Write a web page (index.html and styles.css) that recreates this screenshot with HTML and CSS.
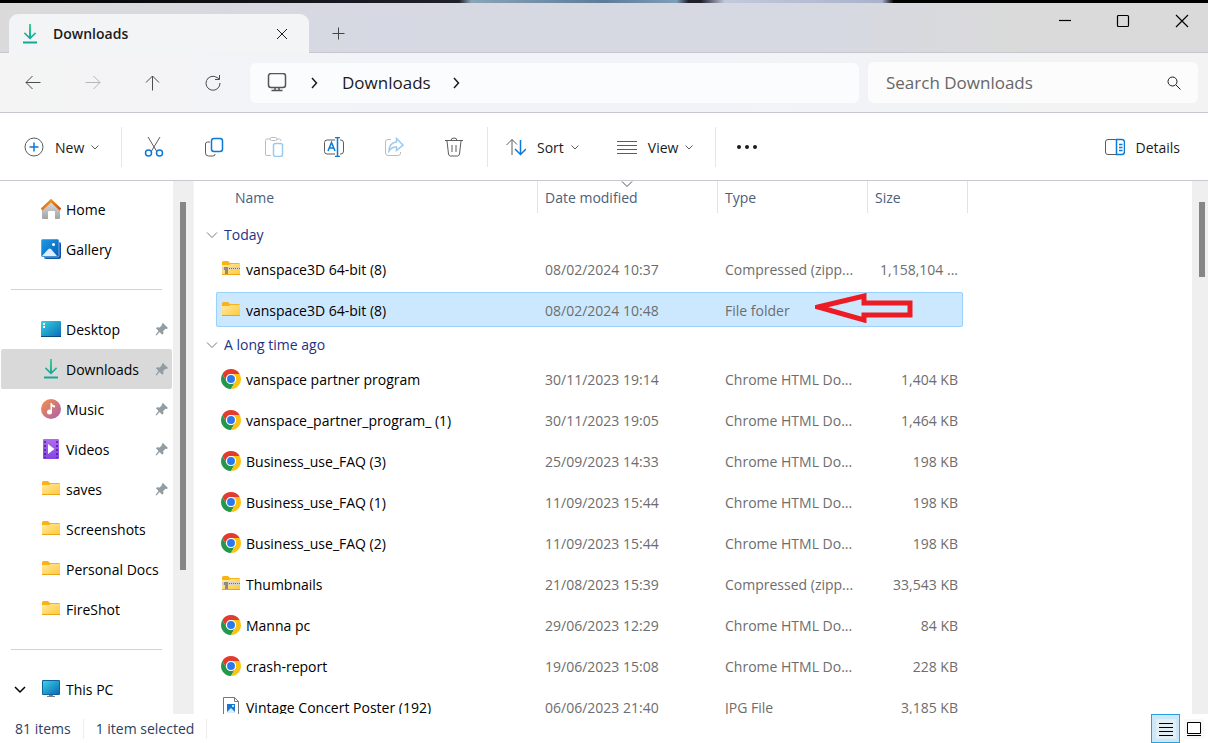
FILE: index.html
```html
<!DOCTYPE html>
<html lang="en">
<head>
<meta charset="utf-8">
<title>Downloads</title>
<link rel="stylesheet" href="styles.css">
</head>
<body>
<svg class="defs" aria-hidden="true">
  <defs>
    <linearGradient id="gGreen" x1="0" y1="0" x2="0" y2="1"><stop offset="0" stop-color="#3bd38a"/><stop offset="1" stop-color="#12a39a"/></linearGradient>
    <linearGradient id="gFolder" x1="0" y1="0" x2="1" y2="1"><stop offset="0" stop-color="#ffe9a4"/><stop offset="1" stop-color="#ffc937"/></linearGradient>
    <linearGradient id="gBlue" x1="0" y1="0" x2="1" y2="1"><stop offset="0" stop-color="#35d3e2"/><stop offset="1" stop-color="#0b69b8"/></linearGradient>
    <linearGradient id="gPic" x1="0" y1="0" x2="1" y2="1"><stop offset="0" stop-color="#1b9de8"/><stop offset="1" stop-color="#0b5cb5"/></linearGradient>
    <linearGradient id="gHouse" x1="0" y1="0" x2="0" y2="1"><stop offset="0" stop-color="#dedede"/><stop offset="1" stop-color="#a3a3a3"/></linearGradient>
    <linearGradient id="gRoof" x1="0" y1="0" x2="1" y2="1"><stop offset="0" stop-color="#f6a01c"/><stop offset="1" stop-color="#d24a0c"/></linearGradient>
    <linearGradient id="gMusic" x1="0" y1="0" x2="1" y2="1"><stop offset="0" stop-color="#f59147"/><stop offset="1" stop-color="#a95fae"/></linearGradient>
    <linearGradient id="gVideo" x1="0" y1="0" x2="0" y2="1"><stop offset="0" stop-color="#b06cf0"/><stop offset="1" stop-color="#8544e4"/></linearGradient>
  </defs>
  <symbol id="download" viewBox="0 0 20 20"><path fill="url(#gGreen)" d="M9 0h2v12.200l4-4 1.200 1.300L10 15.500 3.800 9.500 5 8.200l4 4z"/><path fill="#12a898" d="M3 17.500h14v2H3z"/></symbol>
  <symbol id="folder" viewBox="0 0 20 20"><path fill="#f8b415" d="M1 3.500Q1 2 2.500 2H7l2 2h8.500Q19 4 19 5v10H1z"/><path fill="url(#gFolder)" d="M1 6h7l2-1h9v11H1z"/><path fill="#eda61c" d="M1 15h18v1H1z"/></symbol>
  <symbol id="zip" viewBox="0 0 20 20"><use href="#folder"/><path fill="#d6d2c4" d="M1 8h18v3H1z"/><path stroke="#6f6f6f" stroke-dasharray="1 1" d="M6 9.500h13"/><path fill="#8d8a83" d="M3 8h4v7H4v-4H3z"/></symbol>
  <symbol id="chrome" viewBox="0 0 48 48"><path fill="#e33b2e" d="M24 12h20.780A24 24 0 0 0 3.220 12L13.600 30A12 12 0 0 1 24 12z"/><path fill="#24974a" d="M3.220 12A24 24 0 0 0 24 48l10.400-18a12 12 0 0 1-20.800 0z"/><path fill="#fdc20f" d="M44.780 12A24 24 0 0 1 24 48l10.400-18A12 12 0 0 0 24 12z"/><circle cx="24" cy="24" r="12" fill="#fff"/><circle cx="24" cy="24" r="9.500" fill="#2b79ec"/></symbol>
  <symbol id="image" viewBox="0 0 20 20"><path fill="#fff" stroke="#777" d="M2.500 .5h11l4 4v18h-15z"/><path fill="none" stroke="#777" d="M13.500 .5v4h4"/><path fill="#1678d3" d="M6 7h8v9H6z"/><path fill="#d7edff" d="m6 15 4-4 4 4v1H6z"/><circle cx="12" cy="9" r="1" fill="#fff"/></symbol>
  <symbol id="pin" viewBox="0 0 14 14"><path fill="#929ca3" d="M8 1 13 6l-1.200 1-1.300-.2-2.300 2.300.3 2.400-1.200 1.200-2.800-2.800L1.500 13.500.5 13l3-4L1 6.200l1-1 2.700.2L7 3l-.2-1z"/></symbol>
  <symbol id="down" viewBox="0 0 12 12"><path fill="none" stroke="currentColor" d="m2.500 4.500 3.500 3.500 3.500-3.500"/></symbol>
  <symbol id="wide-down" viewBox="0 0 14 14"><path fill="none" stroke="currentColor" d="m2 4.500 5 5 5-5"/></symbol>
  <symbol id="right" viewBox="0 0 12 12"><path fill="none" stroke="currentColor" stroke-width="1.500" d="m4 1 4.500 5L4 11"/></symbol>
</svg>

<div class="window">
  <div class="wallpaper"></div>
  <header class="titlebar">
    <div class="tab">
      <svg class="i20"><use href="#download"/></svg>
      <span class="tab-title">Downloads</span>
      <button class="tab-close" aria-label="Close tab"><svg class="i12" viewBox="0 0 12 12"><path d="m1 1 10 10M11 1 1 11"/></svg></button>
    </div>
    <button class="new-tab" aria-label="New tab"><svg class="i14" viewBox="0 0 14 14"><path d="M6.500 .5v12M.5 6.500h12"/></svg></button>
    <div class="controls">
      <button aria-label="Minimize"><svg class="i14" viewBox="0 0 14 14"><path d="M1 6.500h12"/></svg></button>
      <button aria-label="Maximize"><svg class="i14" viewBox="0 0 14 14"><rect x="1.500" y="1.500" width="11" height="11" rx="1"/></svg></button>
      <button aria-label="Close"><svg class="i14" viewBox="0 0 14 14"><path d="m1 1 12 12M13 1 1 13"/></svg></button>
    </div>
  </header>

  <nav class="navbar">
    <div class="nav-buttons">
      <button aria-label="Back"><svg class="i18" viewBox="0 0 18 18"><path d="M16.500 8.500H2M8.500 2 2 8.500 8.500 15"/></svg></button>
      <button aria-label="Forward" disabled><svg class="i18" viewBox="0 0 18 18"><path d="M1.500 8.500H16M9.500 2 16 8.500 9.500 15"/></svg></button>
      <button aria-label="Up"><svg class="i18" viewBox="0 0 18 18"><path d="M8.500 16.500V2M2 8.500 8.500 2 15 8.500"/></svg></button>
      <button aria-label="Refresh"><svg class="i18" viewBox="0 0 18 18"><path d="M16 9A7 7 0 1 1 13 3.500L15.500 5M15.500 1v4.500H11"/></svg></button>
    </div>
    <div class="address">
      <svg class="i20 monitor" viewBox="0 0 20 20"><rect x="1.500" y=".5" width="17" height="14" rx="2.500"/><path d="M8 15v2m4-2v2M4.500 17.500h11"/></svg>
      <svg class="i12"><use href="#right"/></svg>
      <a href="#">Downloads</a>
      <svg class="i12"><use href="#right"/></svg>
    </div>
    <label class="search">
      <input type="text" placeholder="Search Downloads" aria-label="Search Downloads">
      <svg class="i14" viewBox="0 0 14 14"><circle cx="5.500" cy="5.500" r="4.500"/><path d="m9 9 4.500 4.500"/></svg>
    </label>
  </nav>

  <div class="toolbar">
    <button class="new"><svg class="i20" viewBox="0 0 20 20"><circle cx="10" cy="10" r="9"/><path class="blue" d="M10 5.500v9M5.500 10h9"/></svg><span>New</span><svg class="i12"><use href="#down"/></svg></button>
    <div class="group">
      <button aria-label="Cut"><svg class="i20" viewBox="0 0 20 20"><path d="m4 0 8.500 14M16 0 7.500 14"/><circle class="blue" cx="4.500" cy="16" r="3"/><circle class="blue" cx="15.500" cy="16" r="3"/></svg></button>
      <button aria-label="Copy"><svg class="i20" viewBox="0 0 20 20"><path d="M6 5H3.500A2 2 0 0 0 1.500 7v9a3 3 0 0 0 3 3H9a2 2 0 0 0 2-2"/><rect class="blue" x="7.500" y="1.500" width="11" height="13" rx="2.500"/></svg></button>
      <button aria-label="Paste" disabled><svg class="i20" viewBox="0 0 20 20"><path d="M7 18.500H3a1.500 1.500 0 0 1-1.500-1.500V3.500A1.500 1.500 0 0 1 3 2h3m7 0h2.500Q17 2 17 4"/><rect x="6" y=".5" width="7" height="3" rx="1.500"/><rect class="blue" x="9.500" y="6.500" width="9" height="13" rx="2"/></svg></button>
      <button aria-label="Rename"><svg class="i20" viewBox="0 0 20 20"><path d="M11 3H3a2.500 2.500 0 0 0-2.500 2.500v9A2.500 2.500 0 0 0 3 17h8m5-14h1q2.500 0 2.500 3v8q0 3-2.500 3h-1"/><path class="blue" d="M13.500 1v18M11 .5h5M11 19.500h5M4 14 7.500 5.500 11 14M5.500 11h4"/></svg></button>
      <button aria-label="Share" disabled><svg class="i20" viewBox="0 0 20 20"><path d="M7 2.500H4A2.500 2.500 0 0 0 1.500 5v11A2.500 2.500 0 0 0 4 18.500h10a2.500 2.500 0 0 0 2.500-2.500v-1"/><path class="blue" d="M12.500 1.500 19 8l-6.500 5.500V10Q8 9.500 5 14 5 6 12.500 5z"/></svg></button>
      <button aria-label="Delete"><svg class="i20" viewBox="0 0 20 20"><path d="M1 3.500h18M7 3.500Q7 1 10 1t3 2.500M3 4l1.500 13q.3 2 2 2h7q1.700 0 2-2L17 4M8 8v7m4-7v7"/></svg></button>
    </div>
    <div class="group labelled">
      <button><svg class="i20" viewBox="0 0 20 20"><path d="M6 18V2.500M.5 8 6 2.500 11 7.500"/><path class="blue" d="M14.500 3v14.500M9 12l5.500 5.500L20 12"/></svg><span>Sort</span><svg class="i12"><use href="#down"/></svg></button>
      <button><svg class="i20" viewBox="0 0 20 20"><path d="M0 4.500h20M0 8.500h20M0 12.500h20M0 16.500h20"/></svg><span>View</span><svg class="i12"><use href="#down"/></svg></button>
    </div>
    <button class="more" aria-label="See more"><svg class="i20" viewBox="0 0 20 20"><g class="dots"><circle cx="2" cy="10" r="2"/><circle cx="10" cy="10" r="2"/><circle cx="18" cy="10" r="2"/></g></svg></button>
    <button class="details"><svg class="i20" viewBox="0 0 20 20"><path d="M12 2.500H3A2.500 2.500 0 0 0 .5 5v10A2.500 2.500 0 0 0 3 17.500h9"/><path class="blue" d="M11.500 2.500H17q2.500 0 2.500 3v9q0 3-2.500 3h-5.500zM14 7.500h3.500M14 10.500h3.500M14 13.500h3.500"/></svg><span>Details</span></button>
  </div>

  <main class="main">
    <aside class="sidebar">
      <div class="tree">
        <a href="#"><svg class="i20" viewBox="0 0 20 20"><path fill="url(#gHouse)" d="M1 9 10 2l9 7v10q0 1-1 1h-4v-7q0-1-1-1H8q-1 0-1 1v7H2q-1 0-1-1z"/><path fill="none" stroke="url(#gRoof)" stroke-width="2.500" d="M.5 10.500 10 1.500l9.500 9"/></svg><span>Home</span></a>
        <a href="#"><svg class="i20" viewBox="0 0 20 20"><path fill="#0a55a8" d="M3 3h15q2 0 2 2v13q0 2-2 2H5q-2 0-2-2z"/><rect width="18" height="18" rx="1.500" fill="url(#gPic)" stroke="#fff" stroke-width=".5"/><path fill="#dceefc" d="m1 17 6.500-7q1-1 2.500 0l6 7z"/><circle cx="12.500" cy="5.500" r="1.500" fill="#fff"/></svg><span>Gallery</span></a>
        <hr>
        <a href="#"><svg class="i20" viewBox="0 0 20 20"><rect y="2" width="20" height="16" rx="1" fill="url(#gBlue)"/><path fill="#074b83" d="M0 17h20v1H0z"/><path fill="#fff" d="M2 4h2v2H2zM2 7h2v2H2z"/></svg><span>Desktop</span><svg class="pin"><use href="#pin"/></svg></a>
        <a href="#" class="current"><svg class="i20"><use href="#download"/></svg><span>Downloads</span><svg class="pin"><use href="#pin"/></svg></a>
        <a href="#"><svg class="i20" viewBox="0 0 20 20"><circle cx="10" cy="10" r="10" fill="url(#gMusic)"/><circle cx="8.500" cy="13" r="2.500" fill="#fff"/><path fill="#fff" d="M9.500 4h1.500q0 2 3 2.500v2q-2 0-3-1V13H9.500z"/></svg><span>Music</span><svg class="pin"><use href="#pin"/></svg></a>
        <a href="#"><svg class="i20" viewBox="0 0 20 20"><rect x="2" width="16" height="20" rx="1" fill="url(#gVideo)"/><path stroke="#43237b" stroke-width="1.500" stroke-dasharray="2 2" d="M4 2v17M16 2v17"/><path fill="#fff" d="m7 5 6.500 5L7 15z"/></svg><span>Videos</span><svg class="pin"><use href="#pin"/></svg></a>
        <a href="#"><svg class="i20"><use href="#folder"/></svg><span>saves</span><svg class="pin"><use href="#pin"/></svg></a>
        <a href="#"><svg class="i20"><use href="#folder"/></svg><span>Screenshots</span></a>
        <a href="#"><svg class="i20"><use href="#folder"/></svg><span>Personal Docs</span></a>
        <a href="#"><svg class="i20"><use href="#folder"/></svg><span>FireShot</span></a>
        <hr>
        <a href="#" class="root"><svg class="i12 expand" viewBox="0 0 12 12"><path d="m1 4 5 5 5-5"/></svg><svg class="i20" viewBox="0 0 20 20"><rect x="1" y="1" width="18" height="15" rx="1" fill="#11639c"/><path fill="url(#gBlue)" d="M2 2h16v13H2z"/><path fill="#777d88" d="M8 16h4v1H8zM6 17h8v1H6z"/></svg><span>This PC</span></a>
      </div>
      <div class="scrollbar"><div class="thumb tall"></div></div>
    </aside>

    <section class="files">
      <table>
        <thead>
          <tr><th>Name</th><th class="sorted">Date modified<svg class="i14"><use href="#wide-down"/></svg></th><th>Type</th><th>Size</th></tr>
        </thead>
        <tbody>
          <tr class="heading"><th colspan="4"><svg class="i14"><use href="#wide-down"/></svg>Today</th></tr>
          <tr><td><svg class="i20"><use href="#zip"/></svg>vanspace3D 64-bit (8)</td><td>08/02/2024 10:37</td><td>Compressed (zipp...</td><td>1,158,104 ...</td></tr>
          <tr class="selected"><td><svg class="i20"><use href="#folder"/></svg>vanspace3D 64-bit (8)</td><td>08/02/2024 10:48</td><td>File folder<svg class="arrow" viewBox="0 0 98 30"><path d="M3 14 49 3v7h46v12H49v5z"/></svg></td><td></td></tr>
          <tr class="heading"><th colspan="4"><svg class="i14"><use href="#wide-down"/></svg>A long time ago</th></tr>
          <tr><td><svg class="i20"><use href="#chrome"/></svg>vanspace partner program</td><td>30/11/2023 19:14</td><td>Chrome HTML Do...</td><td>1,404 KB</td></tr>
          <tr><td><svg class="i20"><use href="#chrome"/></svg>vanspace_partner_program_ (1)</td><td>30/11/2023 19:05</td><td>Chrome HTML Do...</td><td>1,464 KB</td></tr>
          <tr><td><svg class="i20"><use href="#chrome"/></svg>Business_use_FAQ (3)</td><td>25/09/2023 14:33</td><td>Chrome HTML Do...</td><td>198 KB</td></tr>
          <tr><td><svg class="i20"><use href="#chrome"/></svg>Business_use_FAQ (1)</td><td>11/09/2023 15:44</td><td>Chrome HTML Do...</td><td>198 KB</td></tr>
          <tr><td><svg class="i20"><use href="#chrome"/></svg>Business_use_FAQ (2)</td><td>11/09/2023 15:44</td><td>Chrome HTML Do...</td><td>198 KB</td></tr>
          <tr><td><svg class="i20"><use href="#zip"/></svg>Thumbnails</td><td>21/08/2023 15:39</td><td>Compressed (zipp...</td><td>33,543 KB</td></tr>
          <tr><td><svg class="i20"><use href="#chrome"/></svg>Manna pc</td><td>29/06/2023 12:29</td><td>Chrome HTML Do...</td><td>84 KB</td></tr>
          <tr><td><svg class="i20"><use href="#chrome"/></svg>crash-report</td><td>19/06/2023 15:08</td><td>Chrome HTML Do...</td><td>228 KB</td></tr>
          <tr><td><svg class="i20"><use href="#image"/></svg>Vintage Concert Poster (192)</td><td>06/06/2023 21:40</td><td>JPG File</td><td>3,185 KB</td></tr>
        </tbody>
      </table>
    </section>
    <div class="scrollbar narrow"><div class="thumb"></div></div>
  </main>

  <footer class="status">
    <span>81 items</span><span>1 item selected</span>
    <div class="modes">
      <button class="on" aria-label="Details view"><svg class="i20" viewBox="0 0 20 20"><rect class="plate" width="20" height="20" rx="2"/><path d="M3 4.500h14M3 8.500h14M3 12.500h14M3 16.500h14"/></svg></button>
      <button aria-label="Large icons view"><svg class="i20" viewBox="0 0 20 20"><rect class="plate" width="20" height="20" rx="2"/><path fill="#fff" d="M3.500 3.500h13v11h-13z"/><path d="M3 16.500h14"/></svg></button>
    </div>
  </footer>
</div>
</body>
</html>
```
FILE: styles.css
```css
* { box-sizing: border-box; }
body { margin: 0; font: 14px/20px "Open Sans", "Noto Sans", sans-serif; color: #1b1b1b; background: #fff; }
button { border: 0; padding: 0; background: none; font: inherit; color: inherit; display: flex; align-items: center; justify-content: center; }
a { color: inherit; text-decoration: none; }
svg { flex: none; fill: none; stroke: none; }
.defs { position: absolute; width: 0; height: 0; }
.i12 { width: 12px; height: 12px; }
.i14 { width: 14px; height: 14px; }
.i18 { width: 18px; height: 18px; }
.i20 { width: 20px; height: 20px; }
button > svg, .address > svg, .search > svg, .expand { stroke: currentColor; }
.window { height: 100vh; display: flex; flex-direction: column; overflow: hidden; }
.wallpaper { flex: none; height: 3px; background: linear-gradient(90deg, #000 0, #20202b 38%, #8aa4b8 39%, #5b7c99 50%, #7d9fb8 56%, #20202b 57%, #20202b 58%, #c3c9dc 60%, #aab2cc 73%, #000 74%); }

.titlebar { flex: none; height: 50px; display: flex; padding-left: 9px; background: linear-gradient(90deg, #dadada 0, #d6d8e3 30%, #d6d9e2 68%, #dadada 84%); border-bottom: 1px solid #c5c6d0; }
.tab { flex: none; width: 300px; margin-top: 11px; margin-bottom: -1px; padding: 0 21px 0 11px; display: flex; align-items: center; background: #f3f4f6; border-radius: 9px 9px 0 0; }
.tab-title { flex: 1; margin-left: 13px; font-weight: 600; }
.new-tab { width: 60px; margin-top: 12px; color: #444; }
.controls { margin-left: auto; height: 36px; display: flex; color: #000; }
.controls button { width: 58px; }
.controls button:last-child { width: 56px; padding-left: 4px; }
.controls svg { stroke-width: 1.200; }

.navbar { flex: none; height: 60px; display: flex; align-items: center; padding-right: 10px; background: linear-gradient(90deg, #f4f4f4, #f2f3f8 30%, #f2f3f8 60%, #f3f3f3 90%); border-bottom: 1px solid #c8c8d0; }
.nav-buttons { width: 250px; display: flex; padding-left: 3px; }
.nav-buttons button { width: 60px; color: #4c4c4c; }
.nav-buttons button:disabled { color: #b5b5b5; }
.address { flex: 1; height: 40px; display: flex; align-items: center; gap: 21px; padding-left: 17px; font-size: 17px; border-radius: 6px; background: #fbfcfe; }
.address svg + svg { margin-right: 1px; }
.address a + svg { margin-left: -2px; }
.monitor { color: #555; stroke-width: 1.500; }
.search { width: 330px; height: 41px; margin-left: 9px; padding: 0 17px 0 18px; display: flex; align-items: center; border-radius: 6px; background: #fcfcfc; }
.search input { flex: 1; min-width: 0; border: 0; padding: 0; outline: 0; background: none; font: inherit; font-size: 17px; }
.search input::placeholder { color: #666; opacity: 1; }

.toolbar { flex: none; height: 68px; display: flex; align-items: center; padding: 0 28px 0 24px; border-bottom: 1px solid #c8c8d0; }
.toolbar button { gap: 11px; height: 40px; }
.toolbar span { padding-top: 2px; }
.toolbar button > svg { color: #5c5c5c; }
.toolbar .new > svg:last-child, .labelled svg:last-child { margin-left: -6px; stroke: none; }
.toolbar .blue { stroke: #0b7ad6; stroke-width: 1.500; }
.toolbar button:disabled svg { opacity: .4; }
.toolbar .new { width: 97px; justify-content: flex-start; }
.group { height: 40px; display: flex; padding-left: 2px; border-left: 1px solid #e6e6e6; }
.group button { width: 60px; }
.group + .group { margin-left: 3px; }
.toolbar .labelled { gap: 36px; padding-left: 18px; padding-right: 20px; border-right: 1px solid #e6e6e6; }
.labelled button { width: auto; }
.toolbar .more { width: 61px; }
.dots { fill: #1b1b1b; stroke: none; }
.toolbar .details { margin-left: auto; gap: 10px; }

.main { flex: 1; min-height: 0; display: flex; overflow: hidden; }
.sidebar { flex: none; width: 194px; display: flex; border-right: 1px solid #f5f5f5; color: #000; }
.tree { flex: 1; padding: 8px 1px 0; overflow: hidden; }
.tree a { height: 40px; display: flex; align-items: center; gap: 5px; padding: 0 3px 0 40px; border-radius: 2px; white-space: nowrap; }
.tree span { padding-top: 2px; }
.tree .current { background: #d9d9d9; }
.tree .root { padding-left: 13px; }
.expand { margin-right: 10px; stroke-width: 1.500; }
.tree hr { height: 1px; margin: 20px 10px 19px; border: 0; background: #d2d2d2; }
.pin { width: 14px; height: 14px; margin-left: auto; }
.scrollbar { flex: none; width: 20px; padding: 21px 7px 0; background: #efefef; }
.narrow { width: 16px; padding-right: 3px; }
.thumb { height: 75px; background: #868686; }
.tall { height: 368px; }

.files { flex: 1; min-width: 0; overflow: hidden; padding-left: 22px; }
table { display: block; }
thead, tbody { display: flex; flex-direction: column; }
tr { display: grid; grid-template-columns: 322px 180px 150px 95px; width: 747px; height: 35px; margin: 2px 0 4px; border-radius: 2px; }
th, td { padding: 2px 0 0 7px; display: flex; align-items: center; font-weight: 400; text-align: left; white-space: nowrap; }
thead tr { grid-template-columns: 322px 180px 150px 100px; width: 752px; height: 32px; margin: 0 0 8px; }
thead th { color: #4c607a; border-right: 1px solid #e3e3e3; }
thead th:first-child { padding-left: 19px; }
.sorted { position: relative; }
.sorted svg { position: absolute; top: -4px; left: 82px; color: #555; }
tbody tr.heading { display: block; height: 28px; margin: 0; }
.heading th { height: 28px; padding: 0; gap: 5px; margin-left: -11px; color: #1e3287; }
.heading svg { color: #777; }
td { color: #6d6d6d; }
td:first-child { padding-left: 5px; gap: 5px; color: #000; }
td .i20 { margin-top: -2px; }
td:last-child { justify-content: flex-end; padding-right: 5px; }
.selected { background: #cce8ff; outline: 1px solid #99d1ff; outline-offset: -1px; }
.selected td:nth-child(3) { position: relative; }
.arrow { position: absolute; left: 97px; top: 1px; width: 98px; height: 30px; z-index: 1; stroke: #ed1c24; stroke-width: 5px; }

.status { flex: none; height: 29px; display: flex; padding-left: 15px; color: #2b4163; }
.status span { height: 20px; margin-top: 5px; padding-right: 12px; margin-right: 12px; border-right: 1px solid #eee; }
.modes { margin-left: auto; display: flex; color: #000; }
.modes button { width: 28px; border: 1px solid transparent; }
.modes .on { width: 29px; background: #cce8f8; border-color: #2a9fe0; }
.plate { fill: #f3f3f3; fill-opacity: .6; stroke: none; }
```
